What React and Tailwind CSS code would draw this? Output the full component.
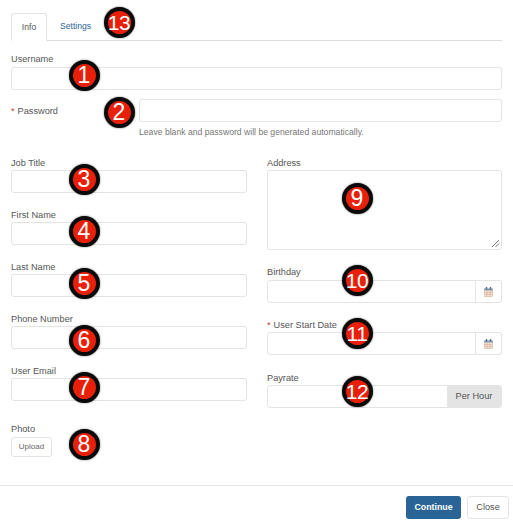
import React from 'react';

const inputCls = 'block w-full h-[23px] border border-[#e3e3e3] rounded-[3px] bg-white';

const badges = [
  { n: 13, x: 119, y: 22 },
  { n: 1, x: 84, y: 75 },
  { n: 2, x: 119, y: 112 },
  { n: 3, x: 84, y: 179 },
  { n: 4, x: 84, y: 231 },
  { n: 5, x: 84, y: 283 },
  { n: 6, x: 84, y: 340 },
  { n: 7, x: 84, y: 387 },
  { n: 8, x: 84, y: 444 },
  { n: 9, x: 357, y: 198 },
  { n: 10, x: 357, y: 280 },
  { n: 11, x: 357, y: 333 },
  { n: 12, x: 357, y: 391 },
];

const Badge = ({ n, x, y }) => (
  <div
    className={`absolute w-[31px] h-[31px] rounded-full bg-[#e8200a] border-[4px] border-[#0a0a0a] flex items-center justify-center text-white leading-none shadow-[0_0_2px_rgba(0,0,0,0.6)] ${
      n > 9 ? 'text-[21px] tracking-[-0.5px]' : 'text-[23px]'
    }`}
    style={{ left: x - 15.5, top: y - 15.5 }}
  >
    {n}
  </div>
);

const Label = ({ children, required, high }) => (
  <div className={`h-[14px] text-[9.2px] text-[#555] ${high ? 'leading-[12px]' : 'leading-[14px]'}`}>
    {required && <span className="text-[#c0392b] mr-[3px]">*</span>}
    {children}
  </div>
);

const Field = ({ label, required, high, className }) => (
  <div className={className}>
    <Label required={required} high={high}>{label}</Label>
    <div className={inputCls} />
  </div>
);

const CalendarIcon = () => (
  <svg width="9" height="10" viewBox="0 0 9 10">
    <rect x="0.3" y="2" width="8.4" height="7.7" fill="#f5e6d6" stroke="#c4ae98" strokeWidth="0.5" />
    <rect x="0.3" y="1.5" width="8.4" height="2" fill="#8497ad" />
    <rect x="1.8" y="0" width="1.4" height="2.4" fill="#55708f" />
    <rect x="5.8" y="0" width="1.4" height="2.4" fill="#55708f" />
    <path d="M3 4v5.5M6 4v5.5M0.5 5.5h8M0.5 7.5h8" stroke="#e0a595" strokeWidth="0.6" />
  </svg>
);

const DateField = ({ label, required, high, className }) => (
  <div className={className}>
    <Label required={required} high={high}>{label}</Label>
    <div className="flex">
      <div className="flex-1 h-[23px] border border-[#e3e3e3] rounded-l-[3px]" />
      <div className="w-[26px] h-[23px] border border-l-0 border-[#e3e3e3] rounded-r-[3px] flex items-center justify-center">
        <CalendarIcon />
      </div>
    </div>
  </div>
);

export default function App() {
  return (
    <div className="relative w-[513px] h-[521px] overflow-hidden bg-white flex flex-col font-['Liberation_Sans',Arial,sans-serif]">
      <div className="flex-1 pt-[13px] pl-[11px] pr-[11px]">
        {/* Tabs */}
        <div className="flex h-[28px] border-b border-[#dcdcdc]">
          <div className="w-[36px] h-[28px] border border-b-white border-[#e3e3e3] rounded-t-[3px] bg-white flex items-center justify-center text-[8.6px] text-[#555]">
            Info
          </div>
          <div className="ml-[13px] h-[27px] flex items-center text-[8.6px] text-[#2a6496]">Settings</div>
        </div>

        <Field label="Username" high className="mt-[12px]" />

        <div className="flex mt-[9px]">
          <div className="w-[128px] pt-[5px]">
            <Label required>Password</Label>
          </div>
          <div className="flex-1">
            <div className={inputCls} />
            <p className="mt-[4px] text-[8.65px] leading-[12px] text-[#777]">
              Leave blank and password will be generated automatically.
            </p>
          </div>
        </div>

        <div className="flex gap-[20px] mt-[18px]">
          <div className="w-[236px]">
            <Field label="Job Title" />
            <Field label="First Name" className="mt-[15px]" />
            <Field label="Last Name" className="mt-[15px]" />
            <Field label="Phone Number" className="mt-[15px]" />
            <Field label="User Email" className="mt-[15px]" />
            <div className="mt-[22px]">
              <Label high>Photo</Label>
              <div className="w-[41px] h-[20px] border border-[#e3e3e3] rounded-[3px] flex items-center justify-center text-[8px] text-[#666]">
                Upload
              </div>
            </div>
          </div>

          <div className="flex-1">
            <Label>Address</Label>
            <div className="relative h-[80px] border border-[#e3e3e3] rounded-[3px]">
              <svg className="absolute right-[1px] bottom-[1px]" width="9" height="9" viewBox="0 0 9 9">
                <path d="M1 8L8 1M4.5 8L8 4.5" stroke="#555" strokeWidth="0.8" />
              </svg>
            </div>
            <DateField label="Birthday" high className="mt-[16px]" />
            <DateField label="User Start Date" required className="mt-[15px]" />
            <div className="mt-[16px]">
              <Label>Payrate</Label>
              <div className="flex h-[23px] border border-[#e3e3e3] rounded-[3px] overflow-hidden">
                <div className="flex-1" />
                <div className="w-[54px] bg-[#e4e4e4] flex items-center justify-center text-[9.2px] text-[#555]">
                  Per Hour
                </div>
              </div>
            </div>
          </div>
        </div>
      </div>

      {/* Footer */}
      <div className="h-[36px] border-t border-[#e6e6e6] flex justify-end gap-[6px] pt-[10px] pr-[4px]">
        <button className="w-[55px] h-[23px] rounded-[3px] bg-[#2a6496] text-white text-[8.8px] font-bold">Continue</button>
        <button className="w-[42px] h-[23px] rounded-[3px] border border-[#e3e3e3] bg-white text-[#555] text-[9.2px]">Close</button>
      </div>

      {badges.map((b) => (
        <Badge key={b.n} {...b} />
      ))}
    </div>
  );
}
